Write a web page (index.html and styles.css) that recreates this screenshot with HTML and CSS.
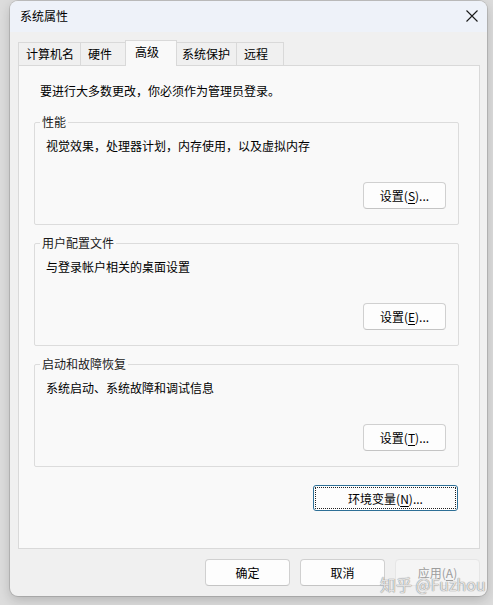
FILE: index.html
```html
<!DOCTYPE html>
<html lang="zh-CN">

<head>
    <meta charset="utf-8">
    <title>系统属性</title>
    <link rel="stylesheet" href="styles.css">
</head>

<body>
    <div class="window">
        <div class="title-bar">
            <span class="title">系统属性</span>
            <svg class="close" width="12" height="12" viewBox="0 0 12 12">
                <path d="M0.5 0.5 L11.5 11.5 M11.5 0.5 L0.5 11.5" stroke="#1a1a1a" stroke-width="1.1" fill="none"/>
            </svg>
        </div>

        <div class="dialog-body">
            <div class="tabs">
                <div class="tab">计算机名</div>
                <div class="tab">硬件</div>
                <div class="tab active">高级</div>
                <div class="tab">系统保护</div>
                <div class="tab">远程</div>
            </div>

            <div class="panel">
                <p class="intro">要进行大多数更改，你必须作为管理员登录。</p>

                <fieldset class="group">
                    <legend>性能</legend>
                    <p class="desc">视觉效果，处理器计划，内存使用，以及虚拟内存</p>
                    <div class="group-actions">
                        <button class="btn">设置(<u>S</u>)...</button>
                    </div>
                </fieldset>

                <fieldset class="group">
                    <legend>用户配置文件</legend>
                    <p class="desc">与登录帐户相关的桌面设置</p>
                    <div class="group-actions">
                        <button class="btn">设置(<u>E</u>)...</button>
                    </div>
                </fieldset>

                <fieldset class="group">
                    <legend>启动和故障恢复</legend>
                    <p class="desc">系统启动、系统故障和调试信息</p>
                    <div class="group-actions">
                        <button class="btn">设置(<u>T</u>)...</button>
                    </div>
                </fieldset>

                <div class="env-row">
                    <button class="btn env-btn">环境变量(<u>N</u>)...</button>
                </div>
            </div>

            <div class="footer">
                <button class="btn footer-btn">确定</button>
                <button class="btn footer-btn">取消</button>
                <button class="btn footer-btn disabled">应用(<u>A</u>)</button>
            </div>
        </div>

        <div class="watermark">知乎 @Fuzhou</div>
    </div>
</body>

</html>
```

FILE: styles.css
```css
body {
    margin: 0;
    padding: 0;
    height: 605px;
    overflow: hidden;
    background-color: #dcdcdc;
    font-family: "Noto Sans CJK SC", "Noto Sans", sans-serif;
    font-size: 12px;
    color: #000;
}

.window {
    position: relative;
    width: 477px;
    height: 595px;
    margin: 1px 0 0 10px;
    background-color: #f0f0f0;
    border-radius: 8px;
    overflow: hidden;
    box-shadow: 0 0 0 1px rgba(0, 0, 0, 0.12), 0 4px 12px rgba(0, 0, 0, 0.18);
}

.title-bar {
    height: 31px;
    display: flex;
    align-items: center;
    justify-content: space-between;
    padding: 0 9px 0 10px;
    background-color: #eef2f9;
    box-sizing: border-box;
}

.title {
    line-height: 16px;
    margin-top: -1px;
}

.close {
    margin-top: -1px;
}

.dialog-body {
    padding: 0 7px 0 8px;
}


.tabs {
    display: flex;
    align-items: flex-end;
    height: 25px;
    margin-top: 8px;
}

.tab {
    box-sizing: border-box;
    height: 23px;
    min-width: 48px;
    padding: 0 6px 0 7px;
    line-height: 22px;
    border: 1px solid #d9d9d9;
    border-bottom: none;
    margin-right: -1px;
    background-color: #f0f0f0;
}

.tab.active {
    position: relative;
    z-index: 1;
    height: 26px;
    margin: 0 -3px -1px -2px;
    padding: 0 8px 0 9px;
    min-width: 52px;
    line-height: 21px;
    background-color: #f9f9f9;
}


.panel {
    border: 1px solid #d9d9d9;
    background-color: #f9f9f9;
    padding: 17px 20px 37px 15px;
}

.intro {
    margin: 0;
    padding-left: 6px;
    line-height: 16px;
}

.group {
    margin: 15px 0 0 0;
    padding: 0 12px 15px 11px;
    border: 1px solid #dcdcdc;
    border-radius: 2px;
}

.group + .group {
    margin-top: 10px;
}

.group legend {
    margin-left: -6px;
    padding: 0 2px;
    line-height: 16px;
    color: #1a1a1a;
}

.desc {
    margin: 8px 0 0 0;
    line-height: 16px;
}

.group-actions {
    display: flex;
    justify-content: flex-end;
    margin-top: 28px;
}


.btn {
    box-sizing: border-box;
    height: 27px;
    width: 83px;
    padding: 0;
    font-family: inherit;
    font-size: 12px;
    color: #000;
    background-color: #fdfdfd;
    border: 1px solid #d0d0d0;
    border-bottom-color: #c4c4c4;
    border-radius: 4px;
}

.btn u {
    text-underline-offset: 2px;
}

.env-row {
    display: flex;
    justify-content: flex-end;
    margin-top: 18px;
    padding-right: 1px;
}

.env-btn {
    width: 145px;
    height: 26px;
    border: 1px solid #2d6f96;
    border-radius: 3px;
    outline: 1px dotted #222;
    outline-offset: -3px;
}


.footer {
    display: flex;
    justify-content: flex-end;
    gap: 10px;
    margin-top: 10px;
}

.footer-btn {
    width: 85px;
}

.footer-btn.disabled {
    color: #9d9d9d;
    background-color: #f5f5f5;
    border-color: #e6e6e6;
}


.watermark {
    position: absolute;
    left: 370px;
    top: 573px;
    white-space: nowrap;
    font-size: 16px;
    line-height: 20px;
    color: rgba(255, 255, 255, 0.75);
    text-shadow: 0 0 1px #8a8a8a, 0 0 1px #8a8a8a;
}
```
